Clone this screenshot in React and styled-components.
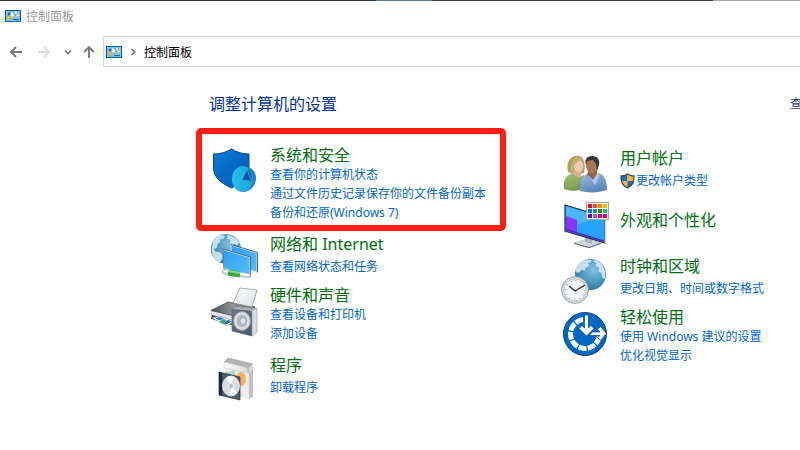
import React from 'react';
import styled, { createGlobalStyle } from 'styled-components';

const GlobalStyle = createGlobalStyle`
    * {
        box-sizing: border-box;
    }

    body {
        margin: 0;
        background: #fff;
        font-family: "Noto Sans", "Noto Sans CJK SC", sans-serif;
        font-size: 12px;
        overflow-x: hidden;
    }
`

const Window = styled.div`
    border-top: 1px solid transparent;
    border-image: linear-gradient(90deg, #3b3538 0 47%, #5b7f96 47% 54%, #423c42 54% 89%, #a6a6a6 89%) 1;
    padding-bottom: 24px;
`

const TitleBar = styled.header`
    display: flex;
    align-items: center;
    gap: 5px;
    height: 30px;
    padding-left: 5px;
    color: #999;
`

const NavBar = styled.nav`
    display: flex;
    align-items: center;
    gap: 6px;
    padding: 5px 0 0 5px;
`

const NavButton = styled.button`
    display: flex;
    align-items: center;
    justify-content: center;
    flex: none;
    width: ${props => props.$width}px;
    height: 22px;
    padding: 0;
    border: none;
    background: none;
    color: ${props => (props.disabled ? '#dcdcdc' : '#777')};
`

const AddressBar = styled.div`
    display: flex;
    align-items: center;
    gap: 7px;
    flex: 1;
    height: 31px;
    padding-left: 2px;
    border: 1px solid #d9d9d9;
    border-right: none;
    color: #777;
`

const Crumb = styled.a`
    color: #000;
    text-decoration: none;
`

const Main = styled.main`
    padding: 26px 0 0 209px;
`

const HeadingRow = styled.div`
    display: flex;
    align-items: center;
    justify-content: space-between;
    margin-bottom: 30px;
`

const Heading = styled.h1`
    margin: 0;
    font-size: 16px;
    font-weight: 400;
    line-height: 22px;
    color: #003399;
`

const ViewLabel = styled.span`
    flex: none;
    width: 10px;
    white-space: nowrap;
    line-height: 22px;
    color: #1e395b;
`

const Columns = styled.div`
    display: grid;
    grid-template-columns: 350px minmax(0, 1fr);
    align-items: start;
`

const Column = styled.div`
    display: flex;
    flex-direction: column;
`

const CategoryItem = styled.section`
    position: relative;
    display: flex;
    align-items: ${props => (props.$marked ? 'flex-start' : 'center')};
    gap: 13px;
    min-height: 48px;
    margin-bottom: ${props => (props.$loose ? 9 : 6)}px;
`

const Marker = styled.div`
    position: absolute;
    inset: -17px 53px -9px -13px;
    border: 6px solid #ff1f12;
    border-radius: 5px;
    pointer-events: none;
`

const CategoryIcon = styled.svg`
    flex: none;
    width: 48px;
    height: 48px;
    overflow: visible;
`

const CategoryTitle = styled.h2`
    margin: 0;
    font-size: 16px;
    font-weight: 400;
    line-height: 20px;

    &:only-child {
        margin-bottom: 6px;
    }

    a {
        color: #006f0f;
        text-decoration: none;
    }
`

const TaskList = styled.ul`
    margin: 0;
    padding: 0;
    list-style: none;
    line-height: 19px;

    li:only-child {
        margin-top: 3px;
    }
`

const TaskLink = styled.a`
    display: flex;
    align-items: center;
    gap: 1px;
    white-space: nowrap;
    color: #0066cc;
    text-decoration: none;
`

const PanelIcon = () => (
  <svg width="16" height="12" viewBox="0 0 16 12">
    <rect width="16" height="12" fill="#0a5c9c" />
    <rect x="1" y="1" width="14" height="10" fill="#6fc9fb" />
    <circle cx="5.5" cy="5" r="3" fill="#fff" />
    <path d="M5.5 5V2a3 3 0 0 0-2.8 4z" fill="#1768ad" />
    <path d="M5.5 5l-2.8 1.2A3 3 0 0 0 8 6.8z" fill="#f7a823" />
    <path d="M10 2.5h4M10 5.5h4" stroke="#fff" strokeWidth="1.4" />
    <path d="M12 2.5h1.5M10 5.5h1.5" stroke="#e27a1a" strokeWidth="1.4" />
    <path d="M2 9.5h5" stroke="#f7a823" />
    <path d="M8 9.5h6" stroke="#1768ad" />
  </svg>
)

const Arrow = ({ rotate = 0 }) => (
  <svg width="14" height="14" viewBox="0 0 14 14" fill="none" stroke="currentColor" strokeWidth="1.9">
    <path d="M13 7H2M7 2L2 7l5 5" transform={`rotate(${rotate} 7 7)`} />
  </svg>
)

const Chevron = ({ down }) => (
  <svg width="8" height="8" viewBox="0 0 8 8" fill="none" stroke="currentColor" strokeWidth="1.7">
    <path d={down ? 'M1 2.5l3 3 3-3' : 'M2.5 1L5.5 4l-3 3'} />
  </svg>
)

const AdminShield = () => (
  <svg width="15" height="16" viewBox="0 0 15 16">
    <path d="M7.5 1C5.5 2.5 3.5 3 1 3c0 6 1 9.5 6.5 12z" fill="#1b6fc4" />
    <path d="M7.5 1C9.5 2.5 11.5 3 14 3c0 6-1 9.5-6.5 12z" fill="#fbb829" />
    <path d="M1.2 8h6.3v7C4 13.5 2 11.5 1.2 8z" fill="#fbb829" />
    <path d="M13.8 8H7.5v7c3.5-1.5 5.500-3.5 6.300-7z" fill="#1b6fc4" />
    <path d="M7.5 1C5.5 2.5 3.5 3 1 3c0 6 1 9.5 6.5 12C13 12.5 14 9 14 3c-2.5 0-4.5-.5-6.500-2z" fill="none" stroke="#3d4348" strokeWidth="1.3" />
  </svg>
)

const Globe = ({ cx, cy, r, id, land }) => (
  <g transform={`translate(${cx} ${cy}) scale(${r / 16})`}>
    <radialGradient id={id} cx="0.6" cy="0.35" r="0.75">
      <stop offset="0" stopColor="#84bfdd" />
      <stop offset="0.55" stopColor="#4a97be" />
      <stop offset="1" stopColor="#286a90" />
    </radialGradient>
    <circle r="16" fill={`url(#${id})`} />
    <path d={land} fill="#d3e9f3" opacity="0.9" />
  </g>
)

const SecurityIcon = () => (
  <CategoryIcon viewBox="0 0 48 48">
    <linearGradient id="shield" x2="1" y2="1">
      <stop offset="0" stopColor="#0a7bd9" />
      <stop offset="1" stopColor="#0359b0" />
    </linearGradient>
    <linearGradient id="pie" x2="1" y2="0">
      <stop offset="0" stopColor="#27bdef" />
      <stop offset="1" stopColor="#1ba3da" />
    </linearGradient>
    <path d="M22.500 4C17 7.5 11 9 4.500 9v14c0 9 7 15 18 20 11-5 17.500-11 17.500-20V9C34 9 28 7.5 22.500 4z" fill="url(#shield)" stroke="#0b4c85" />
    <path d="M33 21c9 0 14 5 14 12 0 7-5 14-14 14z" fill="#1585bd" />
    <ellipse cx="33.5" cy="34" rx="10.500" ry="13" fill="url(#pie)" />
    <path d="M38.500 23.500c3 2 4.500 6 4.500 12.500l-10-1.500z" fill="#0b58a8" />
    <path d="M33 34.500l5.500-11 1.500 7 3 5.500" fill="none" stroke="#4cb4e6" strokeWidth="0.8" />
  </CategoryIcon>
)

const NetworkIcon = () => (
  <CategoryIcon viewBox="0 0 48 48">
    <linearGradient id="screen" x2="1" y2="1">
      <stop offset="0" stopColor="#2c9ff0" />
      <stop offset="1" stopColor="#57bdfb" />
    </linearGradient>
    <Globe
      cx={17}
      cy={18}
      r={15}
      id="netGlobe"
      land="M-14-7c2-4 5-7 9-8l4 1-2 3-4 1 1 2-3 3-1 4-3 1 2 3 4 0 3 3 0 5-3 4-4-2c-3-4-4-8-4-13zM2-15c6 1 10 4 12 8l-2 3-3-2-2 2-3-3 1-3-4-1z"
    />
    <path d="M22 14l26 8v19l-26-7z" fill="url(#screen)" stroke="#dfe9ef" />
    <path d="M22 13.500l26.500 8v20" fill="none" stroke="#273c4d" strokeWidth="0.8" />
    <path d="M14 18.500l27 8v19l-26-8z" fill="url(#screen)" stroke="#e4edf2" />
    <path d="M14 18l27.500 8v20L15 38.500z" fill="none" stroke="#2c4457" strokeWidth="0.7" />
    <path d="M15 41l24 4" stroke="#c8ced1" strokeWidth="5" strokeLinecap="round" />
    <path d="M15 40l24 4" stroke="#f4f6f7" strokeWidth="2" strokeLinecap="round" />
    <path d="M19 41.500l12 2" stroke="#38a845" strokeWidth="6" />
    <path d="M19 40l12 2" stroke="#83d989" strokeWidth="2" />
  </CategoryIcon>
)

const PrinterIcon = () => (
  <CategoryIcon viewBox="0 0 48 48">
    <linearGradient id="cabinet" x2="1" y2="1">
      <stop offset="0" stopColor="#6b7a87" />
      <stop offset="1" stopColor="#4a5863" />
    </linearGradient>
    <linearGradient id="sheet" x2="1" y2="1">
      <stop offset="0" stopColor="#fff" />
      <stop offset="1" stopColor="#dcdee0" />
    </linearGradient>
    <linearGradient id="lid" x2="1" y2="0">
      <stop offset="0" stopColor="#4c5256" />
      <stop offset="0.5" stopColor="#8d9397" />
      <stop offset="1" stopColor="#5a6064" />
    </linearGradient>
    <path d="M2 20l1 7 22 7 21-10v-7z" fill="#e3e5e7" stroke="#a3a8ab" strokeWidth="0.7" />
    <path d="M2 20.500L19 12l27 5-16 10z" fill="url(#lid)" stroke="#3b4145" strokeWidth="0.7" />
    <path d="M31-2l17 2-5 17-19-4z" fill="url(#sheet)" stroke="#85898c" strokeWidth="0.7" />
    <path d="M3 25l20 5v5L2 29z" fill="#3a4146" />
    <path d="M3 28l8-2 14 5-7 5z" fill="#fff" stroke="#98a0a5" strokeWidth="0.6" />
    <path d="M6 28l5-1 4 1.500-5 2z" fill="#2b79d1" />
    <path d="M14 29l4 1-4 4-4-2z" fill="#43a868" />
    <path d="M19 30l4 1.500-6 3-3-1z" fill="#256bb5" />
    <path d="M23 19l20 2v25l-20-5z" fill="url(#cabinet)" stroke="#4d5a64" strokeWidth="0.6" />
    <path d="M23 19l6-2 19 1-5 3z" fill="#a5afb6" />
    <path d="M43 21l5-3v24l-5 4z" fill="#d5dde2" stroke="#939da4" strokeWidth="0.6" />
    <ellipse cx="33" cy="31" rx="8.500" ry="9.500" fill="#d5dadd" stroke="#8b959c" />
    <ellipse cx="33" cy="31" rx="6" ry="7" fill="#b4bcc1" stroke="#f3f5f6" strokeWidth="0.7" />
    <ellipse cx="34" cy="31" rx="3" ry="3.500" fill="#e2e6e8" stroke="#8b959c" strokeWidth="0.7" />
  </CategoryIcon>
)

const ProgramsIcon = () => (
  <CategoryIcon viewBox="0 0 48 48">
    <linearGradient id="carton" x2="1" y2="0">
      <stop offset="0" stopColor="#fafafa" />
      <stop offset="0.85" stopColor="#dedede" />
      <stop offset="1" stopColor="#b4b4b4" />
    </linearGradient>
    <path d="M38 47l8-2-4-4z" fill="#e2e2e2" />
    <path d="M16 13l24 5v29l-24-5z" fill="#ececec" />
    <path d="M40 18l4-4v30l-4 3z" fill="#c2c2c2" />
    <path d="M15 10l4-4 25 6-4 4z" fill="#b3b3b3" stroke="#999" strokeWidth="0.6" />
    <path d="M15 10l25 6v5l-25-5z" fill="url(#carton)" stroke="#c4c4c4" strokeWidth="0.5" />
    <path d="M40 16l4-4v5l-4 4z" fill="#dadada" />
    <path d="M17 20l9-2 1 13-10-2z" fill="#b8d9bf" />
    <ellipse cx="32" cy="27" rx="5" ry="7" fill="#f8b25e" />
    <path d="M29 35l4 9-5 2z" fill="#b8d9bf" />
    <path d="M10 20l21 5v23l-21-5z" fill="#4a5b6b" stroke="#25313b" strokeWidth="0.7" />
    <path d="M10 20l3 1v23l-3-1z" fill="#1d2832" />
    <ellipse cx="22" cy="34" rx="8.500" ry="10" fill="#d9dddf" stroke="#f4f5f6" strokeWidth="0.7" />
    <path d="M22 34l-5-8c2-2 5-2 7-1zM22 34l6 7c-2 3-5 3-7 2z" fill="#fff" />
    <ellipse cx="22" cy="34" rx="2.500" ry="3" fill="#b4bec5" stroke="#fff" strokeWidth="0.8" />
  </CategoryIcon>
)

const UsersIcon = () => (
  <CategoryIcon viewBox="0 0 48 48">
    <linearGradient id="green" x2="0.4" y2="1">
      <stop offset="0" stopColor="#a7c27c" />
      <stop offset="1" stopColor="#77994b" />
    </linearGradient>
    <linearGradient id="blue" x2="0.4" y2="1">
      <stop offset="0" stopColor="#9bbbe0" />
      <stop offset="1" stopColor="#5c88bd" />
    </linearGradient>
    <path d="M5 44c-1-8 1-14 9-16l6 4 5-2 4 13c-8 3-17 4-24 1z" fill="url(#green)" />
    <path d="M9 27c-1-5-1-10 3-14 4-3 10-3 12 1 2 4 2 10 1 14l-8 2z" fill="#b3a05d" />
    <path d="M14 26l8-1v6l-3 2-5-4z" fill="#d9ad8e" />
    <ellipse cx="19.500" cy="21" rx="4.800" ry="6.500" fill="#edcbb0" />
    <path d="M13 19c1-4 3-6 6-7l5 3-4 1-5 4-1 6-3-1z" fill="#c6b572" />
    <path d="M22 46c0-9 2-15 7-17l7 3 5-4c6 2 8 9 8 17-8 3-19 3-27 1z" fill="url(#blue)" transform="translate(-1 0)" />
    <path d="M29 26l9-1v5l-4 5-6-5z" fill="#936647" />
    <ellipse cx="33" cy="20" rx="6" ry="8.500" fill="#a87753" />
    <path d="M27 20c-2-5 1-9 6-9 6 0 8 4 7 9l-2 6-1-7-3-4-6 1z" fill="#383536" />
    <path d="M28 29l6 6 4-6 3 1-5 10z" fill="#a9c6e6" />
  </CategoryIcon>
)

const swatches = [
  ['#e81123', '#ff4343', '#ff8c00', '#ffb900'],
  ['#0078d7', '#0099bc', '#498205', '#00cc6a'],
  ['#5b0fc4', '#8764b8', '#e3008c', '#ea005e'],
]

const AppearanceIcon = () => (
  <CategoryIcon viewBox="0 0 48 48">
    <path d="M15 44l12-4 15 4-12 5z" fill="#cdd6db" stroke="#9aa5ac" strokeWidth="0.5" />
    <path d="M15 44l15 4 12-4v1l-12 4-15-4z" fill="#59636a" />
    <path d="M26 36l7 2v7l-7-2z" fill="#aab6bd" />
    <path d="M6 6l40 12v26L6 32z" fill="#26a3ff" stroke="#222e3c" strokeWidth="1.2" />
    <path d="M7 7.500l34 10L18 26 7 23z" fill="#5dbcff" opacity="0.7" />
    <path d="M7 17l11 4v14L7 31z" fill="#8a35f5" />
    <path d="M7 30.500l38.500 12" stroke="#5a1fc9" strokeWidth="1.5" />
    <path d="M46.500 18v26" stroke="#d4dbe0" strokeWidth="1.5" />
    <rect x="27.500" y="3.500" width="22" height="17" fill="#fff" stroke="#a3a3a3" />
    {swatches.map((row, y) =>
      row.map((color, x) => (
        <rect key={color} x={29 + x * 5} y={5 + y * 5} width="4" height="4" fill={color} />
      ))
    )}
  </CategoryIcon>
)

const ClockIcon = () => (
  <CategoryIcon viewBox="0 0 48 48">
    <Globe
      cx={31.5}
      cy={21.5}
      r={15.5}
      id="clockGlobe"
      land="M-15-6c2-5 6-8 11-9l5 0-1 3-3 0 2 3-4 2-1 3-3-1-3 3-3 0zM4-15c6 2 10 6 11 12l0 8-3-2-1-5-3-1 1-4-4-2 1-3-3-1z"
    />
    <circle cx="16" cy="37" r="13.500" fill="#d4d7d9" stroke="#949a9e" strokeWidth="0.8" />
    <circle cx="16" cy="37" r="11" fill="#f7f8f9" stroke="#b6bbbe" strokeWidth="0.7" />
    <circle cx="16" cy="37" r="9.500" fill="none" stroke="#888" strokeWidth="1.2" strokeDasharray="0.8 4.174" />
    <path d="M10 33l6 5 10-6" fill="none" stroke="#222" strokeWidth="1.2" />
  </CategoryIcon>
)

const EaseIcon = () => (
  <CategoryIcon viewBox="0 0 48 48">
    <circle cx="26" cy="22" r="21.500" fill="#0067c5" stroke="#0b4475" />
    <path d="M24 7.600A14.500 14.500 0 1 0 40.300 24.500" fill="none" stroke="#fff" strokeWidth="5" strokeDasharray="8 1.200" />
    <path
      d="M25.500 3H29.500V16L32 13.500L35 16.500L27.500 24L20 16.500L23 13.500L25.500 16zM30 23.500L33.500 20H41L38.500 17.500L41.500 14.500L47.500 21.500L41.500 28.500L38.500 25.500L41 23.500z"
      fill="#fff"
      stroke="#0a5197"
      strokeWidth="0.8"
    />
  </CategoryIcon>
)

const leftColumn = [
  {
    title: '系统和安全',
    Icon: SecurityIcon,
    tasks: ['查看你的计算机状态', '通过文件历史记录保存你的文件备份副本', '备份和还原(Windows 7)'],
    marked: true,
    loose: true,
  },
  { title: '网络和 Internet', Icon: NetworkIcon, tasks: ['查看网络状态和任务'] },
  { title: '硬件和声音', Icon: PrinterIcon, tasks: ['查看设备和打印机', '添加设备'], loose: true },
  { title: '程序', Icon: ProgramsIcon, tasks: ['卸载程序'] },
]

const rightColumn = [
  { title: '用户帐户', Icon: UsersIcon, tasks: ['更改帐户类型'], admin: true },
  { title: '外观和个性化', Icon: AppearanceIcon, tasks: [] },
  { title: '时钟和区域', Icon: ClockIcon, tasks: ['更改日期、时间或数字格式'] },
  { title: '轻松使用', Icon: EaseIcon, tasks: ['使用 Windows 建议的设置', '优化视觉显示'] },
]

function Category ({ title, Icon, tasks, marked, loose, admin }) {
  return (
    <CategoryItem $marked={marked} $loose={loose}>
      <Icon />
      <div>
        <CategoryTitle><a href="#">{title}</a></CategoryTitle>
        {tasks.length > 0 && (
          <TaskList>
            {tasks.map(task => (
              <li key={task}>
                <TaskLink href="#">{admin && <AdminShield />}{task}</TaskLink>
              </li>
            ))}
          </TaskList>
        )}
      </div>
      {marked && <Marker />}
    </CategoryItem>
  )
}

function App () {
  return (
    <>
      <GlobalStyle />
      <Window>
        <TitleBar>
          <PanelIcon />
          <span>控制面板</span>
        </TitleBar>
        <NavBar>
          <NavButton $width={22} aria-label="后退"><Arrow /></NavButton>
          <NavButton $width={22} aria-label="前进" disabled><Arrow rotate={180} /></NavButton>
          <NavButton $width={14} aria-label="最近位置"><Chevron down /></NavButton>
          <NavButton $width={16} aria-label="向上"><Arrow rotate={90} /></NavButton>
          <AddressBar>
            <PanelIcon />
            <Chevron />
            <Crumb href="#">控制面板</Crumb>
          </AddressBar>
        </NavBar>
        <Main>
          <HeadingRow>
            <Heading>调整计算机的设置</Heading>
            <ViewLabel>查</ViewLabel>
          </HeadingRow>
          <Columns>
            <Column>
              {leftColumn.map(item => <Category key={item.title} {...item} />)}
            </Column>
            <Column>
              {rightColumn.map(item => <Category key={item.title} {...item} />)}
            </Column>
          </Columns>
        </Main>
      </Window>
    </>
  );
}

export default App;
